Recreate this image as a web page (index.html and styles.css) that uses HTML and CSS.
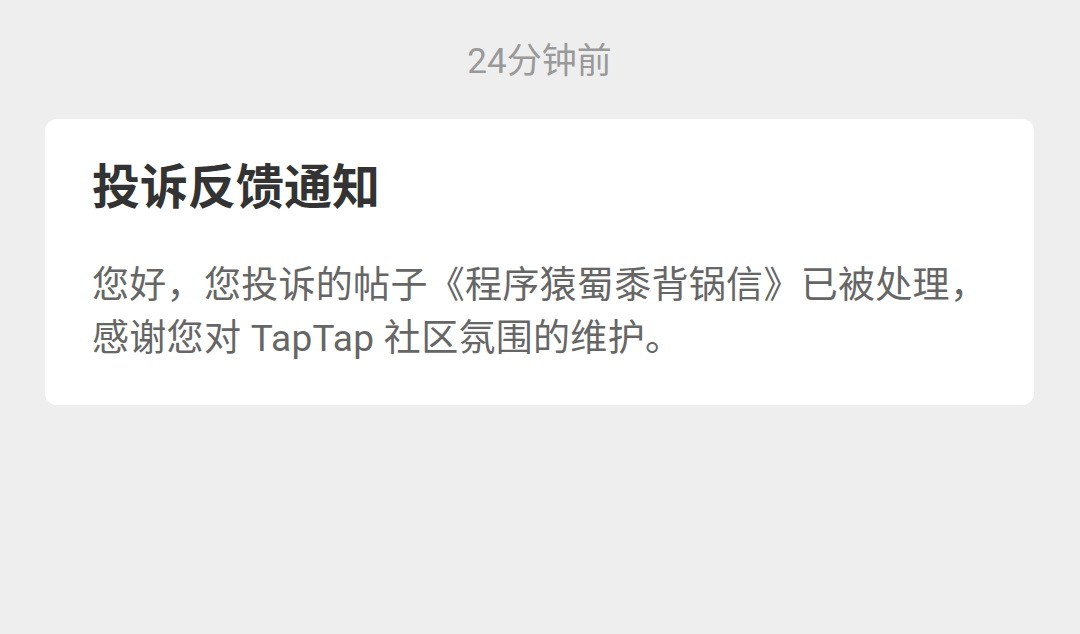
FILE: index.html
```html
<!DOCTYPE html>
<html lang="zh-CN">
<head>
<meta charset="utf-8">
<link rel="stylesheet" href="styles.css">
</head>
<body>
<div class="page">
  <div class="time">24分钟前</div>
  <div class="card">
    <div class="title">投诉反馈通知</div>
    <div class="body">您好，您投诉的帖子《程序猿蜀黍背锅信》已被处理，<br>感谢您对 TapTap 社区氛围的维护。</div>
  </div>
</div>
</body>
</html>
```
FILE: styles.css
```css
html, body {
  margin: 0;
  padding: 0;
  background: #eeeeee;
}
body {
  width: 1080px;
  height: 634px;
  overflow: hidden;
  font-family: Roboto, "Noto Sans CJK SC", sans-serif;
}
.page {
  display: flex;
  flex-direction: column;
  padding: 37px 46px 0 45px;
}
.time {
  text-align: center;
  font-size: 35px;
  line-height: 50px;
  color: #999999;
}
.card {
  margin-top: 32px;
  background: #ffffff;
  border-radius: 12px;
  padding: 39px 47px 40px 47px;
  display: flex;
  flex-direction: column;
  gap: 41px;
}
.title {
  font-size: 48px;
  line-height: 60px;
  font-weight: 700;
  color: #333333;
}
.body {
  font-size: 37px;
  line-height: 53px;
  letter-spacing: 0.3px;
  color: #666666;
  white-space: nowrap;
}
```
